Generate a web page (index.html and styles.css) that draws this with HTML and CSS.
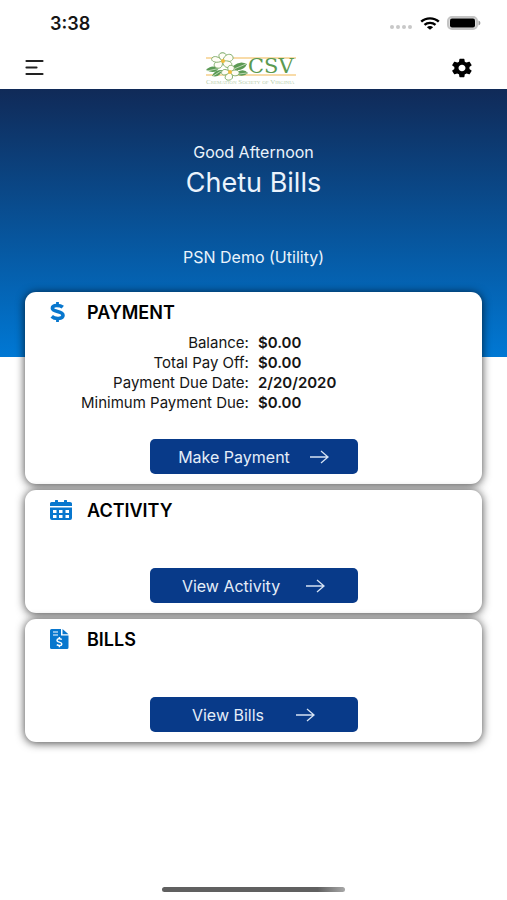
FILE: index.html
```html
<!DOCTYPE html>
<html lang="en">
<head>
    <meta charset="UTF-8">
    <meta name="viewport" content="width=device-width, initial-scale=1.0">
    <title>CSV Payments</title>
    <link rel="stylesheet" href="styles.css">
</head>
<body>
    <div class="status-bar">
        <span class="time">3:38</span>
        <div class="status-icons">
            <svg width="24" height="6" viewBox="0 0 24 6" fill="#c8c8c8">
                <circle cx="3" cy="3" r="2"/><circle cx="9" cy="3" r="2"/><circle cx="15" cy="3" r="2"/><circle cx="21" cy="3" r="2"/>
            </svg>
            <svg class="wifi" width="20" height="13" viewBox="0 0 20 13" fill="none" stroke="#000" stroke-width="2.4">
                <path d="M1.2 4.7C6 .2 14 .2 18.800 4.700"/>
                <path d="M4.500 7.900C7.500 5.200 12.500 5.200 15.500 7.900"/>
                <path d="M10 12.800L6.900 10.200C8.500 8.600 11.500 8.600 13.100 10.200Z" fill="#000" stroke="none"/>
            </svg>
            <svg width="34" height="14" viewBox="0 0 34 14">
                <rect x="1" y="1" width="29" height="12" rx="4" fill="#ddd" stroke="#c4c4c4" stroke-width="2"/>
                <rect x="3" y="2.500" width="25" height="9" rx="2"/>
                <path d="M31.500 4.500C34 5.500 34 8.500 31.500 9.500Z" fill="#999"/>
            </svg>
        </div>
    </div>

    <header class="navbar">
        <button class="icon-button" aria-label="Menu">
            <svg width="28" height="18" viewBox="0 0 28 18" stroke="#222" stroke-width="2.2" stroke-linecap="round">
                <path d="M2.500 2H18.500M2.500 8.500H12.500M2.500 15H18.500"/>
            </svg>
        </button>
        <svg class="logo" width="92" height="34" viewBox="0 0 92 34" role="img" aria-label="CSV">
            <path d="M1 7H91M1 24H91" stroke="#f6cf8c" stroke-width="1.300"/>
            <g fill="#5b9a55">
                <path d="M1 19Q6 13 14 17Q10 24 1 19Z"/>
                <path d="M7 25Q10 18 17 19Q15 27 7 25Z"/>
                <path d="M28 15Q35 9 42 13Q39 20 30 19Z"/>
                <path d="M32 21Q39 17 43 22Q39 26 33 24Z"/>
                <path d="M15 2Q20 0 21 5L16 6Z"/>
            </g>
            <path d="M2 20L16 17M8 25L16 20M29 18L41 13M34 23L42 22" stroke="#e5f2dd" stroke-width=".700"/>
            <g fill="#fffdf5" stroke="#7aa965" stroke-width=".900">
                <path d="M16 9C12 5 14 1 19 2C23 3 21 8 18 10Z"/>
                <path d="M18 9C20 2 27 2 28 6C29 10 23 12 18 10Z"/>
                <path d="M18 10C26 9 29 13 25 16C21 18 17 14 18 10Z"/>
                <path d="M17 10C19 16 14 19 10 16C7 13 12 9 17 10Z"/>
                <path d="M17 10C11 13 5 10 7 7C9 4 15 6 17 10Z"/>
                <path d="M24 21C21 16 24 13 28 15C31 17 28 20 25 22Z"/>
                <path d="M25 21C31 17 35 20 34 23C32 26 27 25 25 22Z"/>
                <path d="M25 21C30 26 27 30 22 29C18 27 21 23 25 21Z"/>
                <path d="M25 21C20 26 15 24 17 20C19 17 23 19 25 21Z"/>
            </g>
            <circle cx="18" cy="10" r="2" fill="#f1bb3b"/>
            <circle cx="25" cy="21" r="2" fill="#f1bb3b"/>
            <text class="logo-name" x="43" y="22">CSV</text>
            <text class="logo-caption" x="1" y="33">Cremation Society of Virginia</text>
        </svg>
        <button class="icon-button" aria-label="Settings">
            <svg width="24" height="22" viewBox="0 0 24 24" preserveAspectRatio="none">
                <path d="M19.400 13c0-.3.100-.6.100-1s0-.7-.1-1l2.100-1.600c.2-.2.200-.4.100-.6l-2-3.500c-.1-.2-.4-.3-.6-.2l-2.500 1c-.5-.4-1.100-.7-1.700-1l-.4-2.600c0-.3-.2-.5-.5-.5h-4c-.3 0-.5.200-.5.500L9 5.100c-.6.200-1.200.6-1.700 1l-2.500-1c-.2-.1-.5 0-.6.200l-2 3.500c-.1.200-.1.500.1.600L4.400 11c0 .3-.1.600-.1 1s0 .7.100 1l-2.100 1.600c-.2.200-.2.400-.1.600l2 3.500c.1.200.4.300.6.200l2.500-1c.5.400 1.100.7 1.700 1l.4 2.600c0 .3.200.5.500.5h4c.3 0 .5-.2.500-.5l.4-2.600c.6-.2 1.200-.6 1.700-1l2.500 1c.2.100.5 0 .6-.2l2-3.500c.1-.2.100-.5-.1-.6L19.400 13zM12 15.500c-1.900 0-3.500-1.600-3.500-3.500s1.600-3.500 3.500-3.500 3.500 1.600 3.500 3.500-1.600 3.500-3.500 3.500z"/>
            </svg>
        </button>
    </header>

    <section class="hero">
        <p class="greeting">Good Afternoon</p>
        <h1>Chetu Bills</h1>
        <p class="company">PSN Demo (Utility)</p>
    </section>

    <main class="cards">
        <section class="card">
            <div class="card-title">
                <svg width="22" height="22" viewBox="0 0 22 22" fill="none" stroke="#0877ce">
                    <path d="M7.500 1V4.500M7.500 17V21" stroke-width="2.800"/>
                    <path d="M12.800 6.200C10.500 4.300 2.400 3.200 2.400 7.300C2.400 11.500 13 9.500 13 14.200C13 18.400 4.800 18.200 1.700 15.400" stroke-width="3.600"/>
                </svg>
                <h2>PAYMENT</h2>
            </div>
            <dl class="details">
                <dt>Balance:</dt><dd>$0.00</dd>
                <dt>Total Pay Off:</dt><dd>$0.00</dd>
                <dt>Payment Due Date:</dt><dd>2/20/2020</dd>
                <dt>Minimum Payment Due:</dt><dd>$0.00</dd>
            </dl>
            <button class="action">Make Payment
                <svg width="20" height="14" viewBox="0 0 20 14"><path d="M1 7H19M12 1L19 7L12 13"/></svg>
            </button>
        </section>

        <section class="card">
            <div class="card-title">
                <svg width="22" height="22" viewBox="0 0 22 22" fill="#0877ce">
                    <path d="M0 7V4.500Q0 3 1.500 3H5V1.500Q5 1 5.600 1H7.400Q8 1 8 1.500V3H14V1.500Q14 1 14.600 1H16.400Q17 1 17 1.500V3H20Q22 3 22 4.500V7Z"/>
                    <path fill-rule="evenodd" d="M0 8.500H22V19Q22 21 20 21H2Q0 21 0 19ZM3 11V14H6.500V11ZM9 11V14H12.500V11ZM15.500 11V14H19V11ZM3 16V19H6.500V16ZM9 16V19H12.500V16ZM15.500 16V19H19V16Z"/>
                </svg>
                <h2>ACTIVITY</h2>
            </div>
            <button class="action action-activity">View Activity
                <svg width="20" height="14" viewBox="0 0 20 14"><path d="M1 7H19M12 1L19 7L12 13"/></svg>
            </button>
        </section>

        <section class="card">
            <div class="card-title">
                <svg width="22" height="22" viewBox="0 0 22 22">
                    <path d="M0 2.500Q0 1 1.500 1H11V7.500H18.500V19.500Q18.500 21 17 21H1.500Q0 21 0 19.500Z" fill="#0877ce"/>
                    <path d="M12.500 1L18.500 6.200H12.500Z" fill="#0877ce"/>
                    <path d="M3 4H8M3 7H8" stroke="#fff" stroke-width="1.200"/>
                    <path d="M11.800 11.500C10 10.200 7 10.700 7 12.500C7 14.600 11.800 13.600 11.800 15.900C11.800 18 8.500 18 6.800 16.700M9.400 9V11M9.400 17.500V19.300" fill="none" stroke="#fff" stroke-width="1.500"/>
                </svg>
                <h2>BILLS</h2>
            </div>
            <button class="action action-bills">View Bills
                <svg width="20" height="14" viewBox="0 0 20 14"><path d="M1 7H19M12 1L19 7L12 13"/></svg>
            </button>
        </section>
    </main>

    <div class="home-indicator"></div>
</body>
</html>
```

FILE: styles.css
```css
/* General Styling */
* {
    box-sizing: border-box;
}

body {
    background-color: #FFFFFF;
    color: #151515;
    font-family: Inter, 'Liberation Sans', sans-serif;
    font-size: 15px;
    margin: 0;
    min-height: 100vh;
    display: flex;
    flex-direction: column;
}

h1,
h2,
p,
dl,
dd {
    margin: 0;
}

svg {
    display: block;
    flex: none;
}

/* Top bars */
.status-bar {
    display: flex;
    justify-content: space-between;
    align-items: center;
    height: 46px;
    padding: 0 26px 0 50px;
}

.time {
    font-size: 18px;
    font-weight: 600;
}

.status-icons {
    display: flex;
    align-items: center;
    gap: 7px;
}

.status-icons svg:first-child {
    margin-top: 8px;
}

.navbar {
    display: flex;
    justify-content: space-between;
    align-items: center;
    height: 43px;
    padding: 0 33px 0 24px;
}

.icon-button {
    display: flex;
    padding: 0;
    border: none;
    background: none;
    cursor: pointer;
}

.logo-name {
    font-family: 'DejaVu Serif', serif;
    font-size: 21px;
    fill: #5B9A50;
}

.logo-caption {
    font-family: 'Liberation Serif', serif;
    font-size: 7px;
    font-variant: small-caps;
    fill: #B9CFAE;
}

/* Greeting */
.hero {
    height: 268px;
    padding-top: 52px;
    background: linear-gradient(#102A58, #0078D4);
    color: #EAF3FC;
    text-align: center;
}

.greeting,
.company {
    font-size: 16px;
    line-height: 22px;
}

h1 {
    font-size: 27px;
    font-weight: 400;
    line-height: 40px;
}

.company {
    margin-top: 43px;
}

/* Cards */
.cards {
    display: flex;
    flex-direction: column;
    gap: 6px;
    margin-top: -65px;
    padding: 0 25px;
}

.card {
    display: flex;
    flex-direction: column;
    padding: 8px 0 10px;
    background-color: #FFFFFF;
    border-radius: 11px;
    box-shadow: 0 1px 10px rgba(0, 0, 0, 0.75);
}

.card-title {
    display: flex;
    align-items: center;
    gap: 15px;
    height: 24px;
    padding-left: 25px;
}

h2 {
    color: #000000;
    font-size: 18px;
    font-weight: 600;
}

.details {
    display: grid;
    grid-template-columns: 49% 1fr;
    column-gap: 9px;
    margin-top: 9px;
    line-height: 20px;
}

.details dt {
    text-align: right;
}

.details dd {
    font-weight: 600;
}

.action {
    display: flex;
    justify-content: center;
    align-items: center;
    gap: 19px;
    align-self: center;
    width: 208px;
    height: 35px;
    margin-top: 26px;
    padding: 0;
    border: none;
    border-radius: 5px;
    background-color: #083A89;
    color: #E4EDF8;
    font-family: inherit;
    font-size: 16px;
    cursor: pointer;
}

.action svg {
    fill: none;
    stroke: #D5E2F3;
    stroke-width: 1.3;
}

.action-activity,
.action-bills {
    margin-top: 46px;
}

.action-activity {
    gap: 25px;
}

.action-bills {
    gap: 31px;
}

.home-indicator {
    width: 36%;
    height: 5px;
    margin: auto auto 8px;
    border-radius: 3px;
    background: linear-gradient(to right, #606060 85%, #A8A8A8);
}
```
